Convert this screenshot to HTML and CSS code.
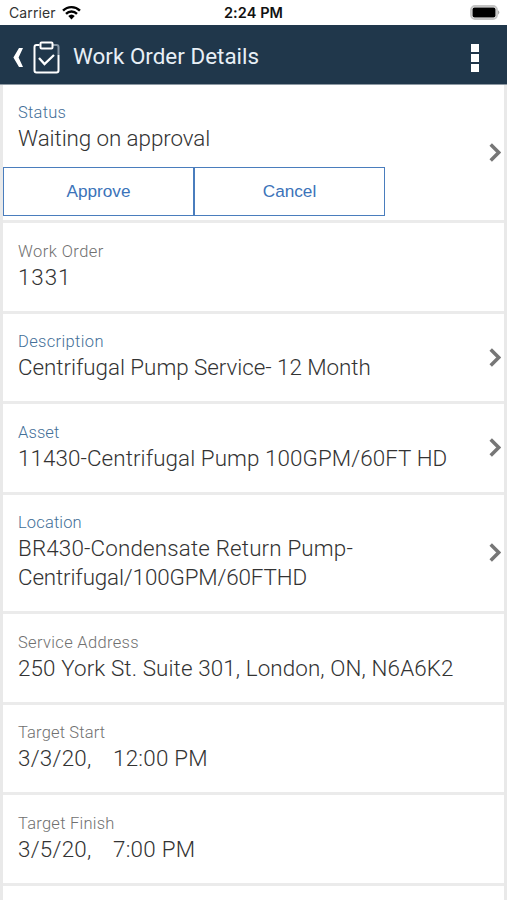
FILE: index.html
```html
<!DOCTYPE html>
<html lang="en">
<head>
<meta charset="utf-8">
<title>Work Order Details</title>
<link rel="stylesheet" href="styles.css">
</head>
<body>
<div class="statusbar">
  <div class="carrier"><span>Carrier</span>
    <svg class="wifi" viewBox="0 0 18 14"><path d="M1 5.2a11.4 11.4 0 0 1 16 0M3.8 8.2a7.4 7.4 0 0 1 10.4 0" fill="none" stroke="#000" stroke-width="2.3"/><path d="M5.9 10.3a4.5 4.5 0 0 1 6.2 0L9 13.6z"/></svg>
  </div>
  <div class="clock">2:24 PM</div>
  <svg class="battery" viewBox="0 0 30 15"><rect x="1" y="1" width="26" height="13" rx="4" fill="#fff" stroke="#c4c4c4" stroke-width="1.8"/><rect x="2.500" y="2.500" width="23" height="10" rx="2"/><path d="M28 5.3q2.6 2.2 0 4.4z" fill="#aaa"/></svg>
</div>
<header class="header">
  <svg class="back" viewBox="0 0 10 19"><path d="M6 0h4L5.6 9.500 10 19H6L.4 9.500z" fill="#fff"/></svg>
  <svg class="clipboard" viewBox="0 0 27 33"><g fill="none" stroke="#fff" stroke-width="2"><path d="M6.500 4H3.500Q1.500 4 1.500 6V29.500Q1.500 31.500 3.500 31.500H23.500Q25.500 31.500 25.500 29.500V14"/><path d="M20 4h3.500Q25.500 4 25.500 6V14" stroke="#8796a4"/><rect x="7.500" y="1.500" width="12" height="6" rx="1"/><path d="M6 17l5.500 6L21 14" stroke-width="2.300"/></g></svg>
  <h1 class="title">Work Order Details</h1>
  <div class="menu"><i></i><i></i><i></i></div>
</header>
<main class="list">
  <section class="row row-status link">
    <div class="label l1">Status</div>
    <div class="value v1">Waiting on approval</div>
    <div class="actions"><button>Approve</button><button>Cancel</button></div>
    <svg class="chevron" viewBox="0 0 12 19"><path d="M1.700 1.500l8 8-8 8"/></svg>
  </section>
  <section class="row">
    <div class="label l2">Work Order</div>
    <div class="value v2">1331</div>
  </section>
  <section class="row link">
    <div class="label l3">Description</div>
    <div class="value v3">Centrifugal Pump Service- 12 Month</div>
    <svg class="chevron" viewBox="0 0 12 19"><path d="M1.700 1.500l8 8-8 8"/></svg>
  </section>
  <section class="row link">
    <div class="label l4">Asset</div>
    <div class="value v4">11430-Centrifugal Pump 100GPM/60FT HD</div>
    <svg class="chevron" viewBox="0 0 12 19"><path d="M1.700 1.500l8 8-8 8"/></svg>
  </section>
  <section class="row row-tall link">
    <div class="label l5">Location</div>
    <div class="value"><span class="v5">BR430-Condensate Return Pump-</span><br><span class="v6">Centrifugal/100GPM/60FTHD</span></div>
    <svg class="chevron" viewBox="0 0 12 19"><path d="M1.700 1.500l8 8-8 8"/></svg>
  </section>
  <section class="row">
    <div class="label l6">Service Address</div>
    <div class="value v7">250 York St. Suite 301, London, ON, N6A6K2</div>
  </section>
  <section class="row">
    <div class="label l7">Target Start</div>
    <div class="value datetime"><span class="date">3/3/20,</span><span class="time">12:00 PM</span></div>
  </section>
  <section class="row">
    <div class="label l8">Target Finish</div>
    <div class="value datetime"><span class="date">3/5/20,</span><span class="time">7:00 PM</span></div>
  </section>
</main>
</body>
</html>
```
FILE: styles.css
```css
* { box-sizing: border-box; }
body { margin: 0; height: 900px; overflow: hidden; background: #fff; font-family: Roboto, sans-serif; color: #333; }
.statusbar { height: 25px; padding: 0 7px 0 9px; display: grid; grid-template-columns: 1fr auto 1fr; align-items: center; color: #111; font: 14px/25px Inter, sans-serif; }
.carrier { display: flex; align-items: center; gap: 6px; color: #333; letter-spacing: .1px; }
.wifi { width: 19px; height: 15px; }
.clock { font-weight: 600; font-size: 14.500px; letter-spacing: .1px; margin-left: -2px; }
.battery { width: 30px; height: 15px; justify-self: end; }
.header { height: 60px; background: #20374b; border-bottom: 1px solid #8d99a3; display: flex; align-items: center; padding: 5px 28px 0 13px; color: #fff; }
.back { width: 10px; height: 19px; }
.clipboard { width: 27px; height: 33px; margin-left: 10px; }
.title { margin: -3px 0 0 13px; font-size: 22.400px; font-weight: 400; letter-spacing: .02px; color: #e8eff6; white-space: nowrap; }
.menu { margin: 1px 0 0 auto; display: grid; gap: 2px; }
.menu i { width: 8px; height: 8px; background: #fff; }
.list { height: 815px; border: solid #e9e9e9; border-width: 0 3px; }
.row { position: relative; height: 90.4px; padding: 17.400px 15px 0; border-bottom: 3px solid #ebebeb; }
.row-status { height: 138.400px; }
.row-tall { height: 119.800px; }
.label { font-size: 16.500px; line-height: 22px; font-weight: 300; color: #707070; white-space: nowrap; }
.link .label { color: #446f98; }
.value { font-size: 22.400px; line-height: 29.400px; font-weight: 300; white-space: nowrap; }
.l1 { letter-spacing: .25px; }
.l2 { letter-spacing: .45px; }
.l3 { letter-spacing: .35px; }
.l4 { letter-spacing: .1px; }
.l5 { letter-spacing: .15px; }
.l6 { letter-spacing: .33px; }
.l7 { letter-spacing: .15px; }
.l8 { letter-spacing: .25px; }
.v1 { letter-spacing: -.08px; }
.v2 { letter-spacing: .9px; }
.v3 { letter-spacing: -.04px; }
.v4 { letter-spacing: .08px; }
.v5 { letter-spacing: .16px; }
.v6 { letter-spacing: -.14px; }
.v7 { letter-spacing: .11px; }
.datetime { display: flex; letter-spacing: .25px; }
.date { width: 95px; }
.actions { display: flex; width: 382px; margin: 13px 0 0 -15px; }
.actions button { flex: 1; height: 49px; padding: 0; background: #fff; border: 1.500px solid #4a7dbd; color: #3b73b9; font: 17.200px "Liberation Sans", sans-serif; }
.chevron { position: absolute; right: 3px; top: calc(50% - 9.500px); width: 12px; height: 19px; fill: none; stroke: #777; stroke-width: 3.500; }
```
